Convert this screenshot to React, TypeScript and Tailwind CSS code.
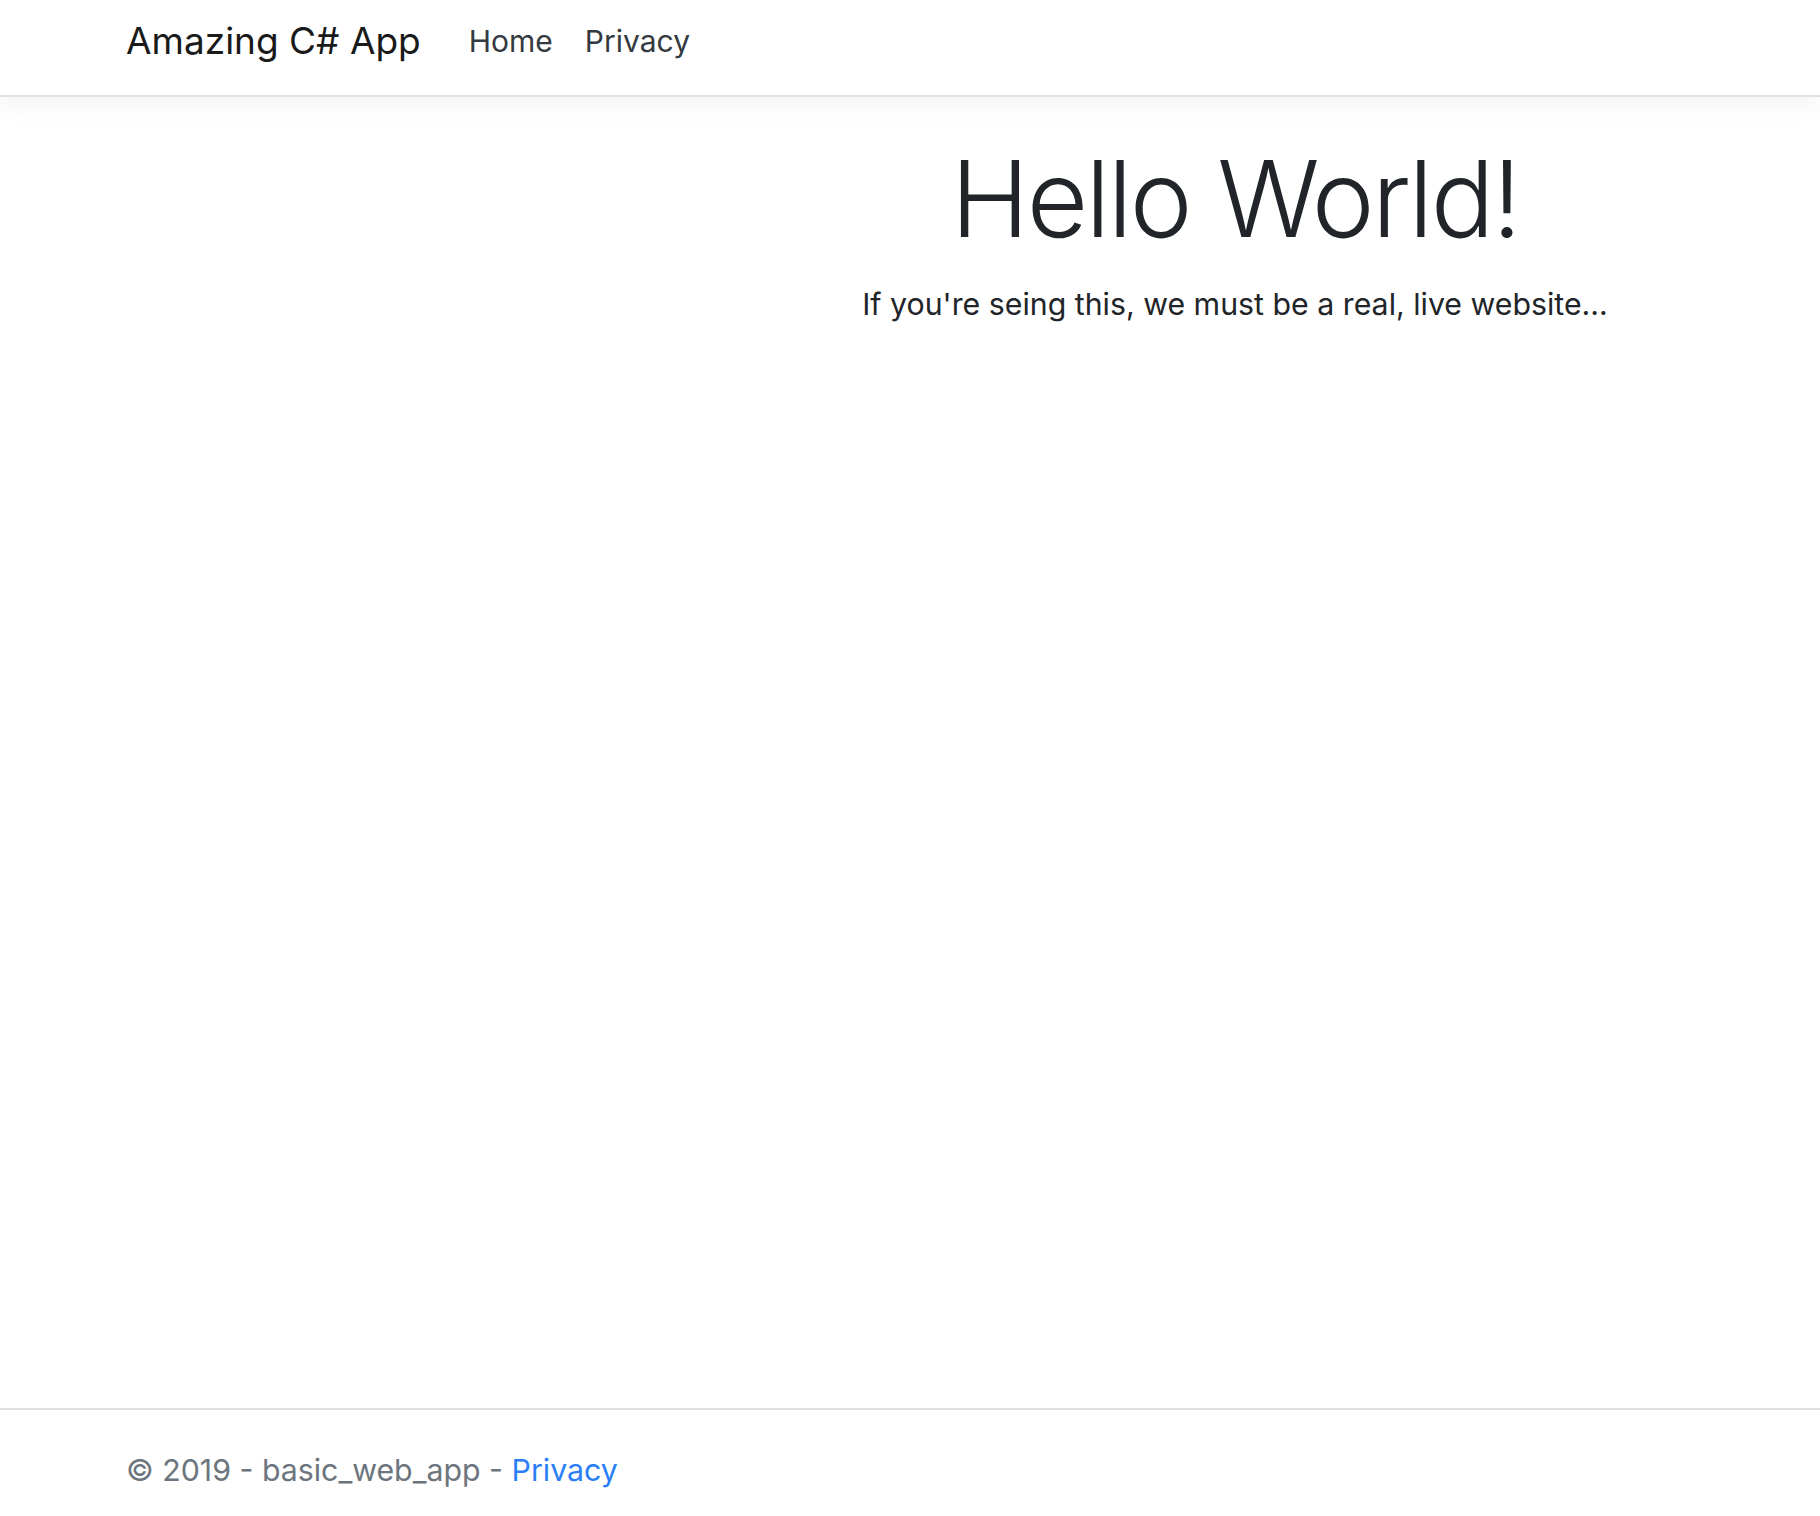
export default function App() {
  return (
    <div className="h-[1516px] overflow-hidden bg-white flex flex-col font-['Inter','Liberation_Sans',sans-serif]">
      {/* Navbar */}
      <header className="h-[97px] shrink-0 border-b-2 border-[#dee2e6] shadow-[0_8px_24px_rgba(0,0,0,0.05)] flex items-center pl-[126px] pb-[14px]">
        <a href="#" className="text-[37px] text-[#1a1a1a] mr-[32px] leading-none">
          Amazing C# App
        </a>
        <nav className="flex items-center">
          <a href="#" className="px-[16px] text-[30px] text-[#343a40] leading-none">Home</a>
          <a href="#" className="px-[16px] text-[30px] text-[#343a40] leading-none">Privacy</a>
        </nav>
      </header>

      {/* Main */}
      <main className="flex-1 flex pt-[38px]">
        <div className="w-[650px] shrink-0" />
        <div className="flex-1 text-center text-[#212529]">
          <h1 className="text-[106px] font-light leading-[1.2] mb-[20px] tracking-[-2.6px]">Hello World!</h1>
          <p className="text-[30.3px] leading-[1.5]">If you're seing this, we must be a real, live website...</p>
        </div>
      </main>

      {/* Footer */}
      <footer className="h-[108px] shrink-0 border-t-2 border-[#dee2e6] pl-[126px] text-[30.3px] leading-[120px] text-[#6c757d] whitespace-nowrap">
        © 2019 - basic_web_app - <a href="#" className="text-[#2a7ff6]">Privacy</a>
      </footer>
    </div>
  );
}
